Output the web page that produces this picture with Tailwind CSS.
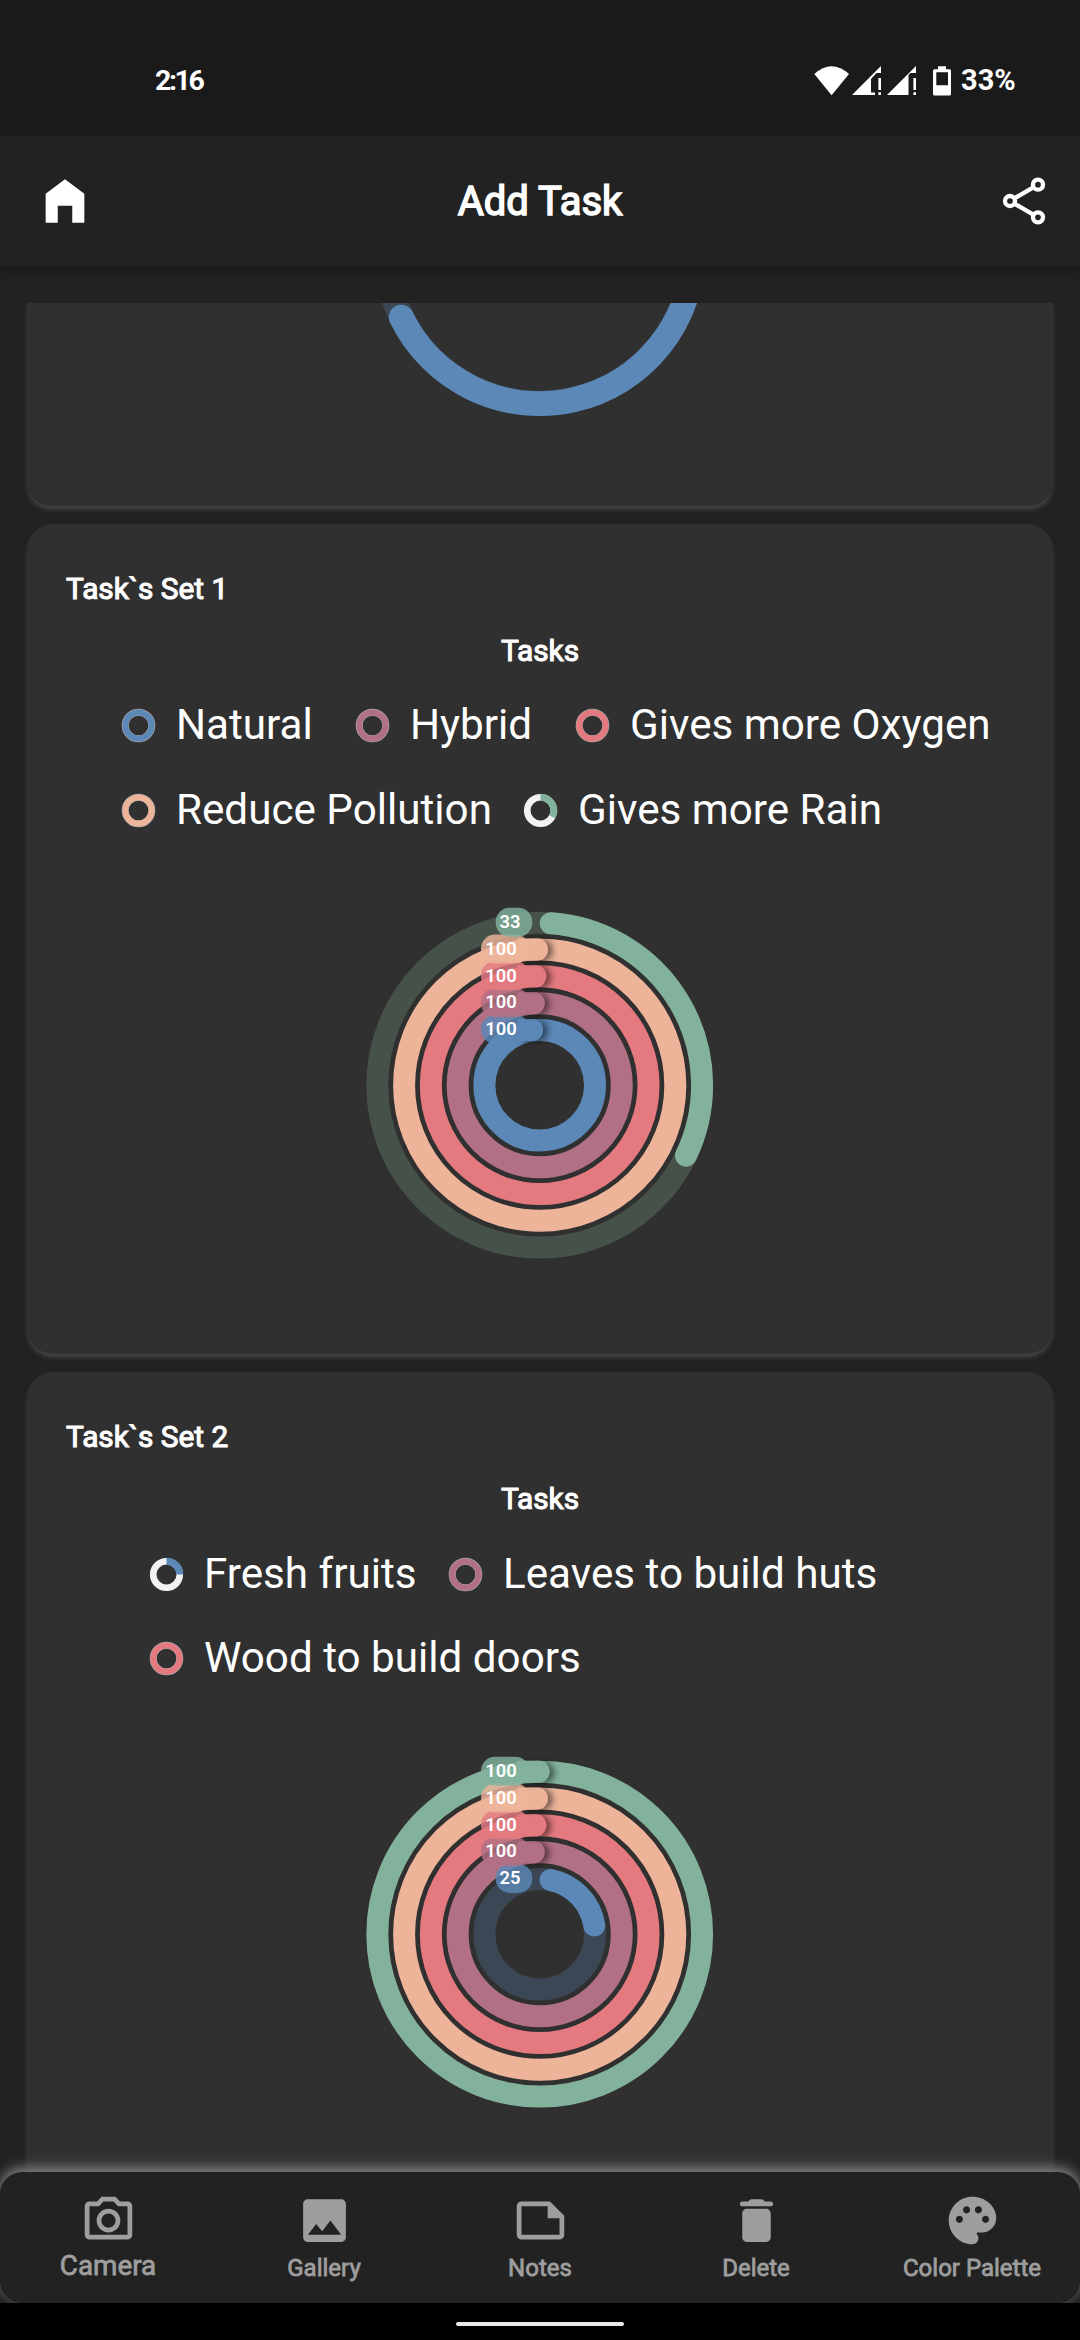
<!DOCTYPE html>
<html lang="en">
<head>
<meta charset="utf-8">
<title>Add Task</title>
<script src="https://cdn.jsdelivr.net/npm/@tailwindcss/browser@4"></script>
</head>
<body class="bg-black">
<div class="flex h-[2340px] w-[1080px] flex-col overflow-hidden bg-[#222222] font-[Roboto,sans-serif] text-white">

  <!-- Status bar -->
  <div class="flex h-[136px] shrink-0 items-start justify-between bg-[#1a1a1a] pl-[155px] pr-[65px] pt-[64px]">
    <div class="text-[28.5px] font-bold leading-[33px] tracking-[-2.4px]">2:16</div>
    <div class="flex items-center">
      <svg class="h-[33px] w-[140px]" viewBox="812 64 140 33" fill="#fff">
        <path d="M814.3 74Q831.600 58.500 849 74L831.600 95.300Z"/>
        <path d="M881 66V73H876.500L871 79V92.500H875V95H852Z"/>
        <path d="M878.400 78h2.600v12h-2.600zM878.400 92.300h2.600v2.700h-2.600z"/>
        <path d="M916 66V73H910.500L908.500 75V95H887Z"/>
        <path d="M913.400 78h2.600v12h-2.600zM913.400 92.300h2.600v2.700h-2.600z"/>
        <path fill-rule="evenodd" d="M938 66.300h8v2.900h3.500q1.500 0 1.500 1.500v23.300q0 1.500-1.500 1.500h-15q-1.500 0-1.500-1.500V70.700q0-1.500 1.500-1.500h3.500zM936.300 72.300v13h11.700v-13z"/>
      </svg>
      <span class="ml-[9px] w-[54px] text-[29px] font-bold leading-[33px]">33%</span>
    </div>
  </div>

  <!-- App bar -->
  <header class="relative z-10 grid h-[130px] shrink-0 grid-cols-[1fr_auto_1fr] items-center bg-[#222222] pl-[36px] pr-[28px] shadow-[0_4px_14px_4px_rgba(0,0,0,0.22)] [clip-path:inset(0_0_-40px_0)]">
    <svg class="h-[58px] w-[58px]" viewBox="0 0 24 24" fill="#fff"><path d="M4 21V9l8-6 8 6v12h-5v-7H9v7z"/></svg>
    <h1 class="mr-[8px] mt-[2px] text-[40px] font-normal leading-[48px] [-webkit-text-stroke:1.5px_#fff]">Add Task</h1>
    <svg class="h-[56px] w-[56px] justify-self-end" viewBox="0 0 24 24" fill="none" stroke="#fff" stroke-width="1.850">
      <circle cx="18" cy="5" r="2.150"/><circle cx="6" cy="12" r="2.150"/><circle cx="18" cy="19" r="2.150"/>
      <path d="M8 10.800l8-4.650M8 13.200l8 4.650"/>
    </svg>
  </header>

  <!-- Task list -->
  <main class="flex h-[1906px] shrink-0 flex-col gap-[18px] overflow-hidden px-[27px] pt-[37px]">
    <section class="h-[203px] shrink-0 overflow-hidden rounded-b-[24px] bg-[#303030] shadow-[0_4px_5px_-1px_#4a4a4a]">
      <svg class="h-[203px] w-[1026px]" viewBox="27 303 1026 203" fill="none" stroke-width="25">
        <circle cx="539.500" cy="249.400" r="153.800" stroke="#3b4754"/>
        <path d="M693.300 249.400A153.800 153.800 0 0 1 401.300 317.300" stroke="#5b88b7" stroke-linecap="round"/>
      </svg>
    </section>

    <section class="flex h-[830px] shrink-0 flex-col rounded-[26px] bg-[#303030] pt-[47px] shadow-[0_4px_5px_-1px_#4a4a4a]">
      <h2 class="pl-[39px] text-[29.8px] leading-[36px] [-webkit-text-stroke:1.1px_#fff]">Task`s Set 1</h2>
      <h3 class="mt-[26px] text-center text-[29.8px] leading-[36px] [-webkit-text-stroke:1.1px_#fff]">Tasks</h3>
      <div class="mt-[31px] flex flex-col gap-[35px] pl-[94px] text-[42.2px] leading-[50px]">
        <div class="flex">
          <div class="flex w-[234px] items-center gap-[20px]"><svg class="h-[35px] w-[35px]" data-ring="#5b88b7" data-value="100"></svg><span>Natural</span></div>
          <div class="flex w-[220px] items-center gap-[20px]"><svg class="h-[35px] w-[35px]" data-ring="#b17084" data-value="100"></svg><span>Hybrid</span></div>
          <div class="flex items-center gap-[20px] whitespace-nowrap"><svg class="h-[35px] w-[35px]" data-ring="#e47a80" data-value="100"></svg><span>Gives more Oxygen</span></div>
        </div>
        <div class="flex">
          <div class="flex w-[402px] items-center gap-[20px] whitespace-nowrap"><svg class="h-[35px] w-[35px]" data-ring="#edb49a" data-value="100"></svg><span>Reduce Pollution</span></div>
          <div class="flex items-center gap-[20px] whitespace-nowrap"><svg class="h-[35px] w-[35px]" data-ring="#83b29c" data-value="33"></svg><span>Gives more Rain</span></div>
        </div>
      </div>
      <svg class="mx-auto mt-[60px] h-[380px] w-[380px]" viewBox="0 0 380 380" data-chart="100,100,100,100,33"></svg>
    </section>

    <section class="flex h-[830px] shrink-0 flex-col rounded-[26px] bg-[#303030] pt-[47px] shadow-[0_4px_5px_-1px_#4a4a4a]">
      <h2 class="pl-[39px] text-[29.8px] leading-[36px] [-webkit-text-stroke:1.1px_#fff]">Task`s Set 2</h2>
      <h3 class="mt-[26px] text-center text-[29.8px] leading-[36px] [-webkit-text-stroke:1.1px_#fff]">Tasks</h3>
      <div class="mt-[32px] flex flex-col gap-[34px] pl-[122px] text-[42.2px] leading-[50px]">
        <div class="flex">
          <div class="flex w-[299px] items-center gap-[20px] whitespace-nowrap"><svg class="h-[35px] w-[35px]" data-ring="#5b88b7" data-value="25"></svg><span>Fresh fruits</span></div>
          <div class="flex items-center gap-[20px] whitespace-nowrap"><svg class="h-[35px] w-[35px]" data-ring="#b17084" data-value="100"></svg><span>Leaves to build huts</span></div>
        </div>
        <div class="flex">
          <div class="flex items-center gap-[20px] whitespace-nowrap"><svg class="h-[35px] w-[35px]" data-ring="#e47a80" data-value="100"></svg><span>Wood to build doors</span></div>
        </div>
      </div>
      <svg class="mx-auto mt-[61px] h-[380px] w-[380px]" viewBox="0 0 380 380" data-chart="25,100,100,100,100"></svg>
    </section>
  </main>

  <!-- Bottom navigation -->
  <div class="relative h-[131px] shrink-0 [clip-path:inset(-20px_0_0_0)]">
    <nav class="grid h-[131px] grid-cols-5 rounded-[22px] bg-[#222222] text-[24px] leading-[30px] text-[#9e9e9e] shadow-[0_-4px_13px_#888888]">
      <div class="flex flex-col items-center pt-[20px]">
        <svg class="h-[57px] w-[57px]" viewBox="0 0 24 24" fill="currentColor"><path d="M14.120 4l1.830 2H20v12H4V6h4.050l1.830-2h4.240M15 2H9L7.170 4H4c-1.100 0-2 .9-2 2v12c0 1.100.9 2 2 2h16c1.100 0 2-.9 2-2V6c0-1.100-.9-2-2-2h-3.170L15 2zm-3 7c1.650 0 3 1.350 3 3s-1.350 3-3 3-3-1.350-3-3 1.350-3 3-3m0-2c-2.760 0-5 2.240-5 5s2.240 5 5 5 5-2.240 5-5-2.240-5-5-5z"/></svg>
        <span class="mt-[2px] text-[27.8px] [-webkit-text-stroke:0.8px_#9e9e9e]">Camera</span>
      </div>
      <div class="flex flex-col items-center pt-[20px]">
        <svg class="h-[57px] w-[57px]" viewBox="0 0 24 24" fill="currentColor"><path d="M21 19V5c0-1.100-.9-2-2-2H5c-1.100 0-2 .9-2 2v14c0 1.100.9 2 2 2h14c1.100 0 2-.9 2-2zM8.500 13.500l2.500 3.010L14.500 12l4.500 6H5l3.500-4.500z"/></svg>
        <span class="mt-[4px] [-webkit-text-stroke:0.8px_#9e9e9e]">Gallery</span>
      </div>
      <div class="flex flex-col items-center pt-[20px]">
        <svg class="h-[57px] w-[57px]" viewBox="0 0 24 24" fill="currentColor"><path d="M16 4H4c-1.100 0-2 .9-2 2v12.010c0 1.100.9 1.990 2 1.990h16c1.100 0 2-.9 2-2v-8l-6-6zM4 18.010V6h11v5h5v7.010H4z"/></svg>
        <span class="mt-[4px] [-webkit-text-stroke:0.8px_#9e9e9e]">Notes</span>
      </div>
      <div class="flex flex-col items-center pt-[20px]">
        <svg class="h-[57px] w-[57px]" viewBox="0 0 24 24" fill="currentColor"><path d="M6 19c0 1.100.9 2 2 2h8c1.100 0 2-.9 2-2V9c0-1.100-.9-2-2-2H8c-1.100 0-2 .9-2 2v10zM18 4h-2.500l-.71-.71c-.18-.18-.44-.29-.7-.29H9.910c-.26 0-.52.110-.7.290L8.500 4H6c-.55 0-1 .45-1 1s.45 1 1 1h12c.55 0 1-.45 1-1s-.45-1-1-1z"/></svg>
        <span class="mt-[4px] [-webkit-text-stroke:0.8px_#9e9e9e]">Delete</span>
      </div>
      <div class="flex flex-col items-center pt-[20px]">
        <svg class="h-[57px] w-[57px]" viewBox="0 0 24 24" fill="currentColor"><path d="M12 2C6.490 2 2 6.490 2 12s4.490 10 10 10c1.380 0 2.500-1.120 2.500-2.500 0-.61-.23-1.200-.64-1.670-.08-.1-.13-.21-.13-.33 0-.28.220-.5.500-.5H16c3.310 0 6-2.690 6-6 0-4.960-4.490-9-10-9zm5.500 11c-.83 0-1.500-.67-1.500-1.500s.67-1.500 1.500-1.500 1.500.67 1.500 1.500-.67 1.500-1.500 1.500zm-3-4c-.83 0-1.500-.67-1.500-1.500S13.670 6 14.500 6s1.500.67 1.500 1.500S15.330 9 14.500 9zM5 11.500c0-.83.67-1.500 1.500-1.500s1.500.67 1.500 1.500S7.330 13 6.500 13 5 12.330 5 11.500zm6-4c0 .83-.67 1.500-1.500 1.500S8 8.330 8 7.500 8.670 6 9.500 6s1.500.67 1.500 1.500z"/></svg>
        <span class="mt-[4px] whitespace-nowrap [-webkit-text-stroke:0.8px_#9e9e9e]">Color Palette</span>
      </div>
    </nav>
  </div>

  <!-- Gesture bar -->
  <div class="flex grow justify-center bg-black pt-[19px]">
    <div class="h-[4px] w-[168px] rounded-full bg-[#e8e8e8]"></div>
  </div>
</div>

<script>
const COLORS = ['#5b88b7', '#b17084', '#e47a80', '#edb49a', '#83b29c'];
const TRACKS = ['#3b4754', '#4a3d42', '#574042', '#57493f', '#455149'];
const polar = (cx, cy, r, deg) => {
  const a = deg * Math.PI / 180;
  return (cx + r * Math.sin(a)).toFixed(2) + ' ' + (cy - r * Math.cos(a)).toFixed(2);
};
const arc = (cx, cy, r, from, to) =>
  `M${polar(cx, cy, r, from)}A${r} ${r} 0 ${to - from > 180 ? 1 : 0} 1 ${polar(cx, cy, r, to)}`;

// Legend markers: a small ring filled up to its value
document.querySelectorAll('[data-ring]').forEach(svg => {
  const color = svg.dataset.ring, v = +svg.dataset.value;
  svg.setAttribute('viewBox', '0 0 35 35');
  svg.innerHTML = v === 100
    ? `<circle cx="17.500" cy="17.500" r="13.300" fill="none" stroke="#a9a5a5" stroke-width="7"/><circle cx="17.500" cy="17.500" r="13.200" fill="none" stroke="${color}" stroke-width="5.800"/>`
    : `<circle cx="17.500" cy="17.500" r="13.300" fill="none" stroke="#f2f2f2" stroke-width="6.600"/><path d="${arc(17.5, 17.5, 13.3, 0, v * 3.6)}" fill="none" stroke="${color}" stroke-width="7"/>`;
});

// Radial bar charts, values listed from the innermost ring outwards
document.querySelectorAll('[data-chart]').forEach(svg => {
  const cx = 189.7, cy = 190.2;
  let rings = `<defs><filter id="cap" x="-50%" y="-50%" width="220%" height="200%"><feDropShadow dx="5" dy="1" stdDeviation="3" flood-color="#000" flood-opacity=".5"/></filter></defs>`;
  let labels = '';
  svg.dataset.chart.split(',').map(Number).forEach((v, i) => {
    const r = +(55.3 + i * 26.77).toFixed(2), y = cy - r;
    const stroke = `fill="none" stroke-width="22"`;
    if (v === 100) {
      const x = cx - 7.7 + i * 1.62;
      rings += `<circle cx="${cx}" cy="${cy}" r="${r}" ${stroke} stroke="${COLORS[i]}"/>`;
      rings += `<g filter="url(#cap)"><path d="M${cx - 22} ${y - 11}H${x}a11 11 0 0 1 0 22H${cx - 22}z" fill="${COLORS[i]}"/></g>`;
    } else {
      const cap = 11 / r * 180 / Math.PI;
      rings += `<circle cx="${cx}" cy="${cy}" r="${r}" ${stroke} stroke="${TRACKS[i]}"/>`;
      rings += `<path d="${arc(cx, cy, r, cap, v * 3.6 - cap * 0.8)}" ${stroke} stroke="${COLORS[i]}" stroke-linecap="round"/>`;
    }
    const wide = v === 100, w = wide ? 48.4 : 36.6, px = cx - (wide ? 58.7 : 44);
    labels += `<rect x="${px}" y="${y - 15}" width="${w}" height="29" rx="14" fill="${COLORS[i]}" fill-opacity=".82"/>`;
    labels += `<text x="${cx - (wide ? 38.7 : 29.6)}" y="${y + 5.2}" font-size="18.400" font-weight="600" text-anchor="middle" fill="#fff">${v}</text>`;
  });
  svg.innerHTML = rings + labels;
});
</script>
</body>
</html>
